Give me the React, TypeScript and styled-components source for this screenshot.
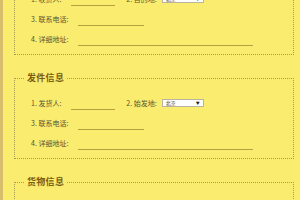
import React from "react";
import styled, { createGlobalStyle } from "styled-components";

const GlobalStyle = createGlobalStyle`
  html, body {
    margin: 0;
    padding: 0;
    background: #f9ec6f;
    overflow: hidden;
  }
  body {
    font-family: "Noto Sans CJK SC", "Noto Sans", sans-serif;
  }
`;

const sections = [
  { title: "收件信息", from: "收货人", to: "目的地", city: "北京" },
  { title: "发件信息", from: "发货人", to: "始发地", city: "北京" },
  { title: "货物信息", from: "发货人", to: "始发地", city: "北京" },
];

const Section = ({ title, from, to, city }: { title: string; from: string; to: string; city: string }) => (
  <Box>
    <Legend>{title}</Legend>
    <Row>
      <Label>1. {from}:</Label>
      <Line $w={44} />
      <Label $gap={11}>2. {to}:</Label>
      <Select>
        <span>{city}</span>
        <Arrow>▼</Arrow>
      </Select>
    </Row>
    <Row>
      <Label>3. 联系电话:</Label>
      <Line $w={66} />
    </Row>
    <Row>
      <Label>4. 详细地址:</Label>
      <Line $w={175} />
    </Row>
  </Box>
);

const App = () => (
  <Page>
    <GlobalStyle />
    {sections.map((s) => (
      <Section key={s.title} {...s} />
    ))}
  </Page>
);
export default App;

// styled-components -----------------
const Page = styled.div`
  width: 300px;
  height: 200px;
  box-sizing: border-box;
  border-left: 3px solid #d8bd6c;
  padding: 0 6px 0 11px;
  overflow: hidden;
`;

const Box = styled.fieldset`
  margin: -32px 0 0 0;
  padding: 0 0 5px 0;
  border: 1px dotted #a89c58;
  & + & {
    margin-top: 17px;
  }
`;

const Legend = styled.legend`
  margin-left: 9px;
  padding: 0 3px;
  font-size: 9px;
  line-height: 12px;
  font-weight: bold;
  color: #7d5c12;
  letter-spacing: 0.3px;
`;

const Row = styled.div`
  display: flex;
  align-items: center;
  height: 20px;
  padding-left: 16px;
  &:first-of-type {
    margin-top: 9px;
  }
`;

const Label = styled.span<{ $gap?: number }>`
  font-size: 7px;
  line-height: 10px;
  color: #5e5430;
  margin-left: ${(p) => p.$gap ?? 0}px;
  margin-right: 10px;
  white-space: nowrap;
`;

const Line = styled.div<{ $w: number }>`
  width: ${(p) => p.$w}px;
  height: 10px;
  margin-top: 2px;
  border-bottom: 1px solid #b59f3e;
`;

const Select = styled.div`
  display: flex;
  align-items: center;
  justify-content: space-between;
  box-sizing: border-box;
  width: 42px;
  height: 8px;
  margin-left: -5px;
  padding: 0 3px 0 3px;
  background: #fff;
  border: 1px solid #b8b4a0;
  font-size: 5px;
  line-height: 6px;
  color: #333;
`;

const Arrow = styled.span`
  font-size: 4px;
  color: #222;
`;
